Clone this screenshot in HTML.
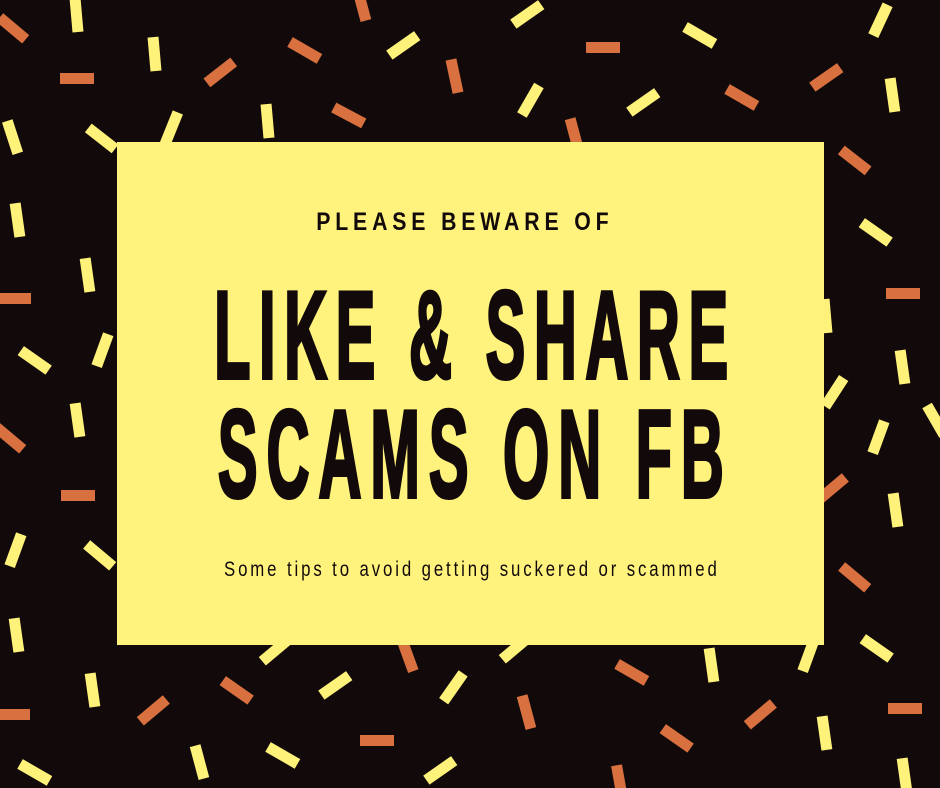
<!DOCTYPE html>
<html><head><meta charset="utf-8"><style>
html,body{margin:0;padding:0;background:#120a0a;}
svg{display:block}
</style></head><body>
<svg width="940" height="788" viewBox="0 0 940 788" xmlns="http://www.w3.org/2000/svg">
<rect width="940" height="788" fill="#120a0a"/>
<g fill="#fff27a">
<rect x="-17" y="-5" width="34" height="11" transform="translate(77,15) rotate(85)"/>
<rect x="-17" y="-5" width="34" height="11" transform="translate(155,54) rotate(85)"/>
<rect x="-17" y="-5" width="34" height="11" transform="translate(403,45) rotate(-35)"/>
<rect x="-17" y="-5" width="34" height="11" transform="translate(268,121) rotate(85)"/>
<rect x="-17" y="-5" width="34" height="11" transform="translate(171,128) rotate(-68)"/>
<rect x="-17" y="-5" width="34" height="11" transform="translate(102,138) rotate(38)"/>
<rect x="-17" y="-5" width="34" height="11" transform="translate(13,137) rotate(72)"/>
<rect x="-17" y="-5" width="34" height="11" transform="translate(527,14) rotate(-35)"/>
<rect x="-17" y="-5" width="34" height="11" transform="translate(530,100) rotate(-60)"/>
<rect x="-17" y="-5" width="34" height="11" transform="translate(643,102) rotate(-35)"/>
<rect x="-17" y="-5" width="34" height="11" transform="translate(700,35) rotate(30)"/>
<rect x="-17" y="-5" width="34" height="11" transform="translate(880,20) rotate(-65)"/>
<rect x="-17" y="-5" width="34" height="11" transform="translate(893,95) rotate(82)"/>
<rect x="-17" y="-5" width="34" height="11" transform="translate(876,232) rotate(35)"/>
<rect x="-17" y="-5" width="34" height="11" transform="translate(826,316) rotate(85)"/>
<rect x="-17" y="-5" width="34" height="11" transform="translate(903,367) rotate(82)"/>
<rect x="-17" y="-5" width="34" height="11" transform="translate(834,392) rotate(-57)"/>
<rect x="-17" y="-5" width="34" height="11" transform="translate(936,420) rotate(60)"/>
<rect x="-17" y="-5" width="34" height="11" transform="translate(878,437) rotate(-70)"/>
<rect x="-17" y="-5" width="34" height="11" transform="translate(896,510) rotate(82)"/>
<rect x="-17" y="-5" width="34" height="11" transform="translate(877,648) rotate(35)"/>
<rect x="-17" y="-5" width="34" height="11" transform="translate(808,655) rotate(-70)"/>
<rect x="-17" y="-5" width="34" height="11" transform="translate(825,733) rotate(82)"/>
<rect x="-17" y="-5" width="34" height="11" transform="translate(905,775) rotate(82)"/>
<rect x="-17" y="-5" width="34" height="11" transform="translate(712,665) rotate(82)"/>
<rect x="-17" y="-5" width="34" height="11" transform="translate(515,648) rotate(-40)"/>
<rect x="-17" y="-5" width="34" height="11" transform="translate(453,687) rotate(-55)"/>
<rect x="-17" y="-5" width="34" height="11" transform="translate(440,770) rotate(-35)"/>
<rect x="-17" y="-5" width="34" height="11" transform="translate(335,685) rotate(-35)"/>
<rect x="-17" y="-5" width="34" height="11" transform="translate(283,755) rotate(30)"/>
<rect x="-17" y="-5" width="34" height="11" transform="translate(200,762) rotate(75)"/>
<rect x="-17" y="-5" width="34" height="11" transform="translate(93,690) rotate(82)"/>
<rect x="-17" y="-5" width="34" height="11" transform="translate(35,772) rotate(30)"/>
<rect x="-17" y="-5" width="34" height="11" transform="translate(17,635) rotate(82)"/>
<rect x="-17" y="-5" width="34" height="11" transform="translate(100,555) rotate(40)"/>
<rect x="-17" y="-5" width="34" height="11" transform="translate(15,550) rotate(-70)"/>
<rect x="-17" y="-5" width="34" height="11" transform="translate(78,420) rotate(82)"/>
<rect x="-17" y="-5" width="34" height="11" transform="translate(35,360) rotate(35)"/>
<rect x="-17" y="-5" width="34" height="11" transform="translate(102,350) rotate(-70)"/>
<rect x="-17" y="-5" width="34" height="11" transform="translate(88,275) rotate(82)"/>
<rect x="-17" y="-5" width="34" height="11" transform="translate(18,220) rotate(82)"/>
<rect x="-17" y="-5" width="34" height="11" transform="translate(275,650) rotate(-40)"/>
</g>
<g fill="#d9703f">
<rect x="-17" y="-5" width="34" height="11" transform="translate(13,28) rotate(40)"/>
<rect x="-17" y="-5" width="34" height="11" transform="translate(77,78) rotate(0)"/>
<rect x="-17" y="-5" width="34" height="11" transform="translate(220,72) rotate(-38)"/>
<rect x="-17" y="-5" width="34" height="11" transform="translate(305,50) rotate(30)"/>
<rect x="-17" y="-5" width="34" height="11" transform="translate(455,76) rotate(78)"/>
<rect x="-17" y="-5" width="34" height="11" transform="translate(362,4) rotate(75)"/>
<rect x="-17" y="-5" width="34" height="11" transform="translate(349,115) rotate(28)"/>
<rect x="-17" y="-5" width="34" height="11" transform="translate(603,47) rotate(0)"/>
<rect x="-17" y="-5" width="34" height="11" transform="translate(742,97) rotate(30)"/>
<rect x="-17" y="-5" width="34" height="11" transform="translate(826,77) rotate(-35)"/>
<rect x="-17" y="-5" width="34" height="11" transform="translate(855,160) rotate(38)"/>
<rect x="-17" y="-5" width="34" height="11" transform="translate(903,293) rotate(0)"/>
<rect x="-17" y="-5" width="34" height="11" transform="translate(832,488) rotate(-40)"/>
<rect x="-17" y="-5" width="34" height="11" transform="translate(855,577) rotate(40)"/>
<rect x="-17" y="-5" width="34" height="11" transform="translate(905,708) rotate(0)"/>
<rect x="-17" y="-5" width="34" height="11" transform="translate(760,714) rotate(-40)"/>
<rect x="-17" y="-5" width="34" height="11" transform="translate(632,672) rotate(30)"/>
<rect x="-17" y="-5" width="34" height="11" transform="translate(677,738) rotate(35)"/>
<rect x="-17" y="-5" width="34" height="11" transform="translate(620,782) rotate(80)"/>
<rect x="-17" y="-5" width="34" height="11" transform="translate(527,712) rotate(75)"/>
<rect x="-17" y="-5" width="34" height="11" transform="translate(377,740) rotate(0)"/>
<rect x="-17" y="-5" width="34" height="11" transform="translate(237,690) rotate(35)"/>
<rect x="-17" y="-5" width="34" height="11" transform="translate(153,710) rotate(-40)"/>
<rect x="-17" y="-5" width="34" height="11" transform="translate(13,714) rotate(0)"/>
<rect x="-17" y="-5" width="34" height="11" transform="translate(78,495) rotate(0)"/>
<rect x="-17" y="-5" width="34" height="11" transform="translate(10,438) rotate(40)"/>
<rect x="-17" y="-5" width="34" height="11" transform="translate(14,298) rotate(0)"/>
<rect x="-17" y="-5" width="34" height="11" transform="translate(575,135) rotate(75)"/>
<rect x="-17" y="-5" width="34" height="11" transform="translate(408,655) rotate(70)"/>
</g>
<rect x="117" y="142" width="707" height="503" fill="#fff37d"/>
<g fill="#120a0a" font-family="'Liberation Sans', sans-serif" font-weight="bold">
<text transform="scale(0.85,1)" x="372" y="230" font-size="25" textLength="344" lengthAdjust="spacing">PLEASE BEWARE OF</text>
<g transform="scale(0.48,1)" stroke="#120a0a" stroke-width="4">
<text x="446" y="378" font-size="124" textLength="1071" lengthAdjust="spacing">LIKE &amp; SHARE</text>
<text x="454" y="497" font-size="124" textLength="1054" lengthAdjust="spacing">SCAMS ON FB</text>
</g>
</g>
<text transform="scale(0.8,1)" x="280" y="576" font-family="'Liberation Sans', sans-serif" font-size="21" fill="#120a0a" textLength="616" lengthAdjust="spacing">Some tips to avoid getting suckered or scammed</text>
</svg>
</body></html>
